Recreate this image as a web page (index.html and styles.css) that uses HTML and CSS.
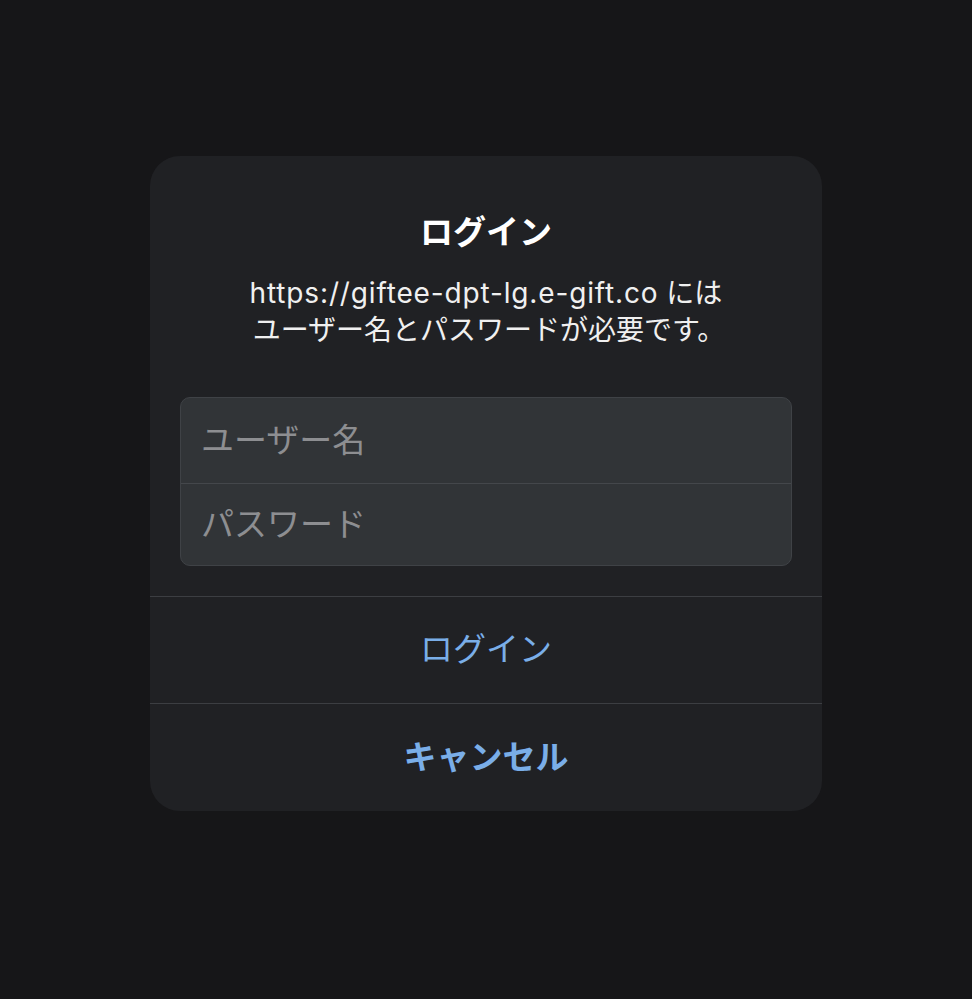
FILE: index.html
```html
<!DOCTYPE html>
<html lang="ja">
<head>
<meta charset="utf-8">
<link rel="stylesheet" href="styles.css">
</head>
<body>
<div class="dialog">
  <div class="head">
    <div class="title">ログイン</div>
    <div class="msg">
      <div class="line"><span class="url">https://giftee-dpt-lg.e-gift.co</span> には</div>
      <div class="line line2">ユーザー名とパスワードが必要です。</div>
    </div>
  </div>
  <div class="fields">
    <div class="field first">ユーザー名</div>
    <div class="field second">パスワード</div>
  </div>
  <div class="btn">ログイン</div>
  <div class="btn cancel">キャンセル</div>
</div>
</body>
</html>
```
FILE: styles.css
```css
html, body {
  margin: 0;
  padding: 0;
  background: #161618;
  height: 999px;
  font-family: "Inter", "Noto Sans CJK JP", sans-serif;
}
.dialog {
  width: 672px;
  margin: 156px auto 0;
  background: #202124;
  border-radius: 30px;
  overflow: hidden;
  box-sizing: border-box;
}
.head {
  padding: 56px 20px 0;
  text-align: center;
}
.title {
  font-size: 33px;
  line-height: 40px;
  font-weight: 700;
  color: #ffffff;
}
.msg {
  margin-top: 23px;
  font-size: 28px;
  line-height: 37px;
  color: #f0f0f0;
}
.url {
  letter-spacing: 0.85px;
}
.line2 {
  padding-left: 6px;
}
.fields {
  margin: 48px 30px 30px;
  background: #313437;
  border: 1px solid #3f4246;
  border-radius: 10px;
}
.field {
  display: flex;
  align-items: center;
  box-sizing: border-box;
  padding: 0 20px 6px;
  font-size: 33px;
  color: #8d8e91;
}
.field.first {
  height: 86px;
  border-bottom: 1px solid #44474b;
}
.field.second {
  height: 81px;
}
.btn {
  height: 107px;
  box-sizing: border-box;
  padding-bottom: 6px;
  border-top: 1px solid #3c3e42;
  display: flex;
  align-items: center;
  justify-content: center;
  font-size: 33px;
  color: #7aaee8;
}
.btn.cancel {
  height: 108px;
  font-weight: 700;
  padding-bottom: 6px;
}
```
